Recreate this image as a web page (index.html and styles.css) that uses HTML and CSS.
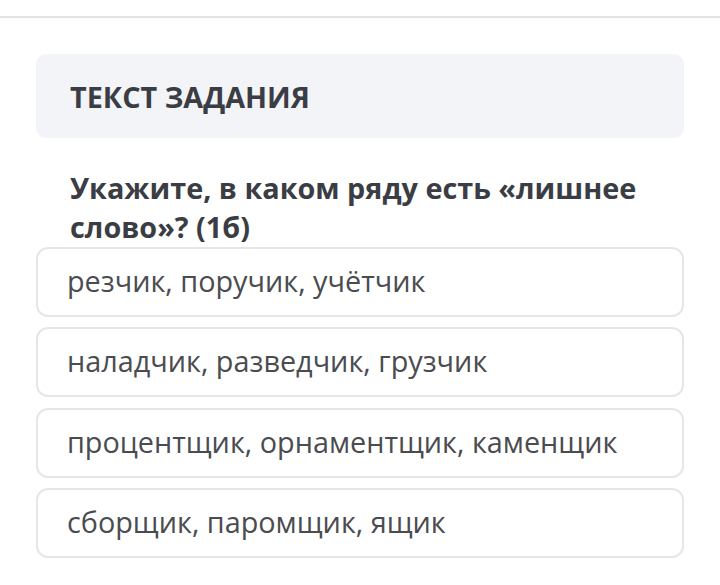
FILE: index.html
```html
<!DOCTYPE html>
<html lang="ru">
<head>
<meta charset="utf-8">
<link rel="stylesheet" href="styles.css">
</head>
<body>
<div class="topbar"></div>
<main class="content">
  <div class="task-header">ТЕКСТ ЗАДАНИЯ</div>
  <div class="question">Укажите, в каком ряду есть «лишнее слово»? (1б)</div>
  <ul class="options">
    <li class="option">резчик, поручик, учётчик</li>
    <li class="option">наладчик, разведчик, грузчик</li>
    <li class="option">процентщик, орнаментщик, каменщик</li>
    <li class="option">сборщик, паромщик, ящик</li>
  </ul>
</main>
</body>
</html>
```
FILE: styles.css
```css
* { box-sizing: border-box; }
html, body { margin: 0; padding: 0; background: #ffffff; }
body {
  width: 720px;
  height: 585px;
  overflow: hidden;
  font-family: "Open Sans", "Noto Sans", sans-serif;
}
.topbar {
  height: 18px;
  border-bottom: 2px solid #e3e3e3;
  box-shadow: 0 2px 2px rgba(0,0,0,0.02);
}
.content {
  padding: 36px 36px 0 36px;
}
.task-header {
  height: 84px;
  background: #f3f4f7;
  border-radius: 10px;
  padding-left: 34px;
  display: flex;
  align-items: center;
  font-weight: 700;
  font-size: 28.8px;
  color: #3a3d44;
}
.question {
  margin-top: 30px;
  padding: 0 34px;
  font-weight: 700;
  font-size: 28.8px;
  line-height: 39px;
  color: #3a3d44;
}
.options {
  list-style: none;
  margin: 1px 0 0 0;
  padding: 0;
  display: flex;
  flex-direction: column;
  gap: 10.3px;
}
.option {
  height: 70px;
  border: 2px solid #e6e6e6;
  border-radius: 12px;
  padding-left: 29px;
  padding-bottom: 3px;
  display: flex;
  align-items: center;
  font-size: 28.8px;
  color: #4a4c50;
}
```
